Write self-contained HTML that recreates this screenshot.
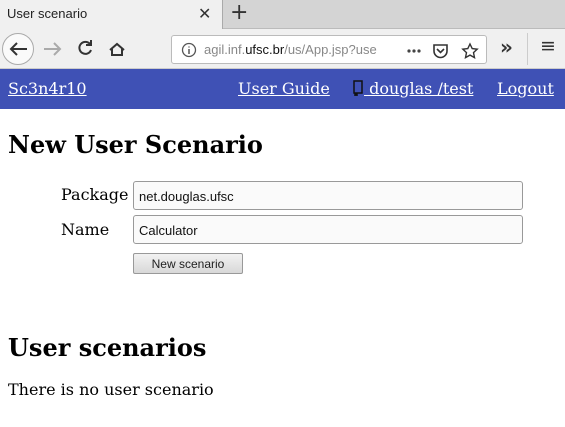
<!DOCTYPE html>
<html><head><style>
*{margin:0;padding:0;box-sizing:border-box}
body{width:565px;height:427px;overflow:hidden;background:#fff;font-family:"DejaVu Serif",serif;position:relative}
.tabbar{position:absolute;left:0;top:0;width:565px;height:29px;background:#d4d4d4;border-bottom:1px solid #bbb}
.tab{position:absolute;left:0;top:0;width:223px;height:29px;background:#f0f0f0;border-right:1px solid #aaa}
.tab span{position:absolute;left:7px;top:6px;font:13px "Liberation Sans",sans-serif;color:#222}
.x{position:absolute;left:198px;top:4px;font:16px "DejaVu Sans",sans-serif;color:#333}
.plus{position:absolute;left:230px;top:0px;font:22px "DejaVu Sans",sans-serif;color:#333}
.tool{position:absolute;left:0;top:29px;width:565px;height:40px;background:#f0f0f0;border-bottom:1px solid #ccc}
.back{position:absolute;left:2px;top:4px;width:32px;height:32px;border-radius:50%;border:1px solid #aaa;background:#fafafa}
.url{position:absolute;left:169px;top:6px;width:316px;height:29px;background:#fff;border:1px solid #bbb;border-radius:3px;margin:0 2px}
.url span{position:absolute;left:32px;top:6px;font:13px "Liberation Sans",sans-serif;color:#888;white-space:nowrap}
.nav{position:absolute;left:0;top:69px;width:565px;height:40px;background:#3f51b5}
.nav a{position:absolute;top:10px;color:#fff;font-size:16px;text-decoration:underline}
h1{position:absolute;left:8px;font-size:24px;font-weight:bold}
.lbl{position:absolute;left:61px;font-size:16px}
.inp{position:absolute;left:133px;width:390px;height:29px;border:1px solid #999;border-radius:3px;background:#fafafa;font:13px "Liberation Sans",sans-serif;padding:7px 0 0 5px;color:#111}
.btn{position:absolute;left:133px;top:253px;width:110px;height:21px;border:1px solid #999;border-radius:2px;background:linear-gradient(#f2f2f2,#d8d8d8);font:12px "Liberation Sans",sans-serif;text-align:center;padding-top:3px;color:#222}
</style></head><body>
<div class="tabbar"><div class="tab"><span>User scenario</span><div class="x">✕</div></div><div class="plus">+</div></div>
<div class="tool">
<div class="back"></div>
<svg style="position:absolute;left:0;top:0" width="160" height="40"><g fill="none" stroke="#333" stroke-width="2"><path d="M27 20H11M17 14l-6 6 6 6"/><path d="M44 20H60M54 14l6 6-6 6" stroke="#aaa"/><path d="M90 15a6 6 0 1 0 1 6M91 11v5h-5"/><path d="M110 21l7-6 7 6M112 19v7h10v-7"/></g></svg>
<div class="url"><svg style="position:absolute;left:9px;top:6px" width="16" height="16"><circle cx="8" cy="8" r="6.5" fill="none" stroke="#555" stroke-width="1.3"/><path d="M8 7v5M8 4.5v1" stroke="#555" stroke-width="1.5"/></svg><span>agil.inf.<b style="color:#111;font-weight:normal">ufsc.br</b>/us/App.jsp?use</span>
<svg style="position:absolute;left:232px;top:6px" width="80" height="18"><g fill="#444"><circle cx="5" cy="9" r="1.6"/><circle cx="10" cy="9" r="1.6"/><circle cx="15" cy="9" r="1.6"/></g><path d="M30 3h13v6a6.5 6.5 0 0 1-13 0z" fill="none" stroke="#333" stroke-width="1.6"/><path d="M33 7l3.5 3.5 3.5-3.5" fill="none" stroke="#333" stroke-width="1.6"/><path d="M66 2l2.2 4.6 5 .6-3.7 3.4 1 5-4.5-2.5-4.5 2.5 1-5-3.7-3.4 5-.6z" fill="none" stroke="#333" stroke-width="1.4"/></svg></div>
<div style="position:absolute;left:500px;top:6px;font:bold 20px 'DejaVu Sans';color:#333">»</div>
<div style="position:absolute;left:527px;top:4px;width:1px;height:32px;background:#ccc"></div>
<div style="position:absolute;left:540px;top:6px;font:19px 'DejaVu Sans';color:#333">≡</div>
</div>
<div class="nav">
<a style="left:8px">Sc3n4r10</a>
<a style="left:238px">User Guide</a>
<a style="left:352px"><svg width="12" height="16" style="vertical-align:-2px"><path d="M2 1h8v12H2zM3 13v2.5l1-1 1 1V13" fill="none" stroke="#111" stroke-width="1.5"/></svg> douglas /test</a>
<a style="left:497px">Logout</a>
</div>
<h1 style="top:130px">New User Scenario</h1>
<div class="lbl" style="top:185px">Package</div>
<div class="inp" style="top:181px">net.douglas.ufsc</div>
<div class="lbl" style="top:220px">Name</div>
<div class="inp" style="top:215px">Calculator</div>
<div class="btn">New scenario</div>
<h1 style="top:333px">User scenarios</h1>
<div style="position:absolute;left:8px;top:380px;font-size:16px">There is no user scenario</div>
</body></html>
